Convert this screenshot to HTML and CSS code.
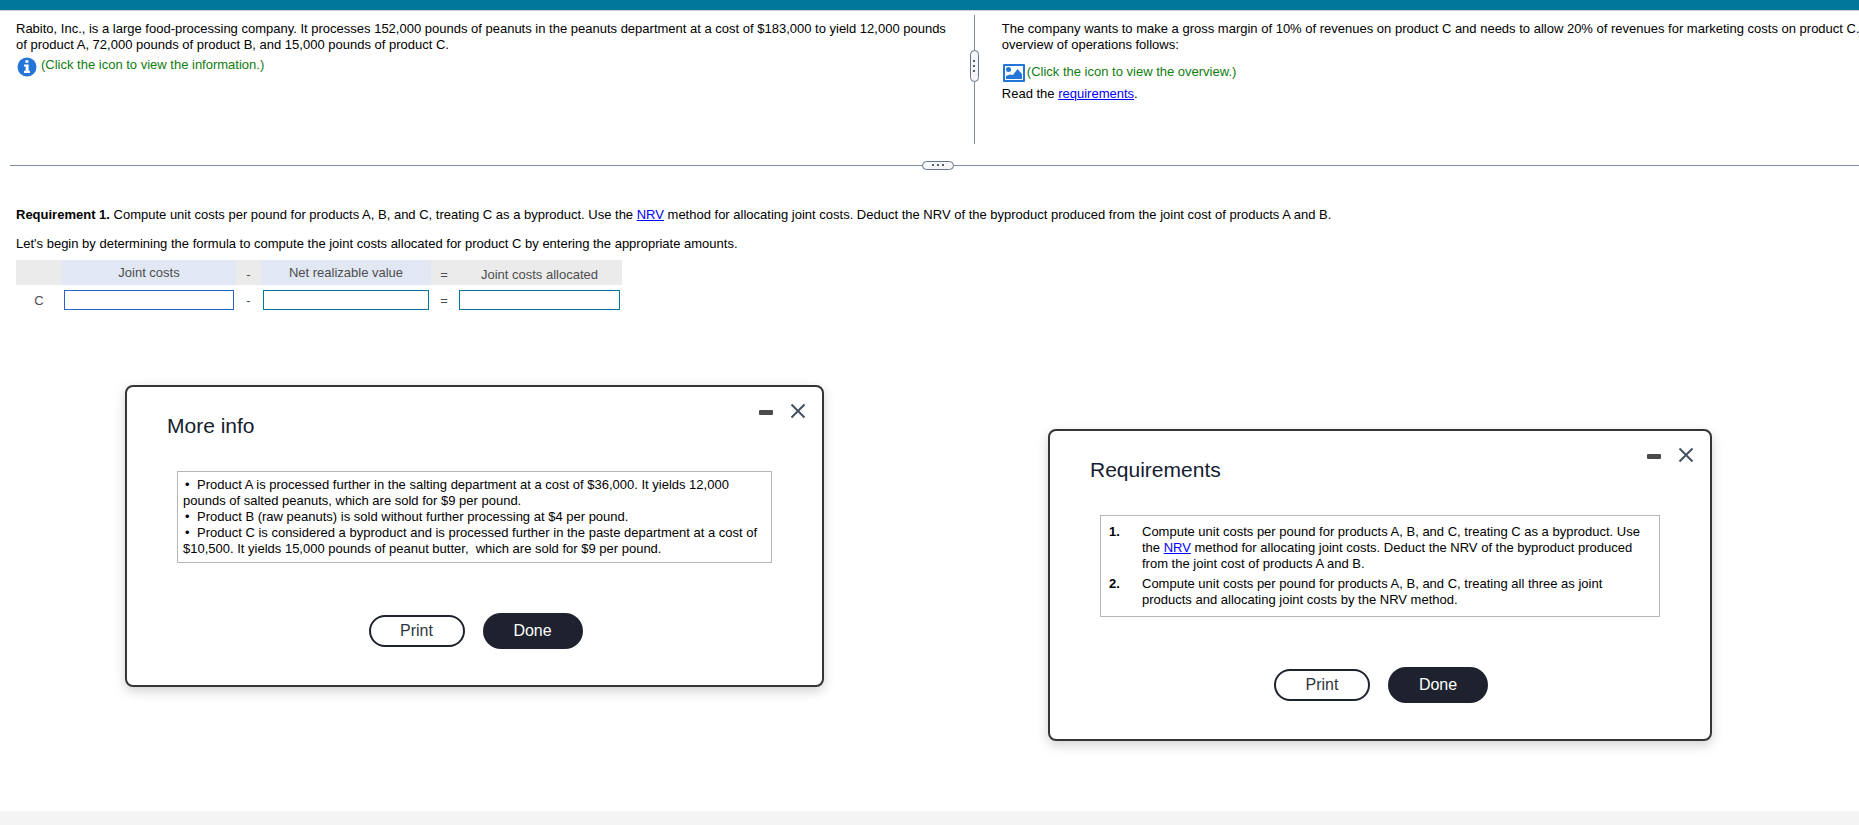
FILE: index.html
```html
<!DOCTYPE html>
<html lang="en">
<head>
<meta charset="utf-8">
<title>Joint cost allocation</title>
<link rel="stylesheet" href="styles.css">
</head>
<body>
<div class="topbar"></div>
<main class="page">
  <div class="problem">
    <section class="pane pane-left">
      <p class="para">Rabito, Inc., is a large food-processing company. It processes 152,000 pounds of peanuts in the peanuts department at a cost of $183,000 to yield 12,000 pounds of product A, 72,000 pounds of product B, and 15,000 pounds of product C.</p>
      <button type="button" class="icon-link">
        <svg class="icon-info" width="20" height="20" viewBox="0 0 20 20" aria-hidden="true"><circle cx="10" cy="10" r="9.500" fill="#2375d8"/><path d="M8.400 3.200h3v2.600h-3zM7 7.500h4.600v6.200H13V16H7v-2.300h1.600V9.600H7z" fill="#fff"/></svg>
        <span>(Click the icon to view the information.)</span>
      </button>
    </section>
    <div class="split-v"><button type="button" class="grip grip-v" aria-label="Resize panes"><i></i><i></i><i></i></button></div>
    <section class="pane pane-right">
      <p class="para nowrap">The company wants to make a gross margin of 10% of revenues on product C and needs to allow 20% of revenues for marketing costs on product C.<br>overview of operations follows:</p>
      <button type="button" class="icon-link icon-link-spaced">
        <svg class="icon-image" width="22" height="18" viewBox="0 0 22 18" aria-hidden="true"><rect width="22" height="18" rx="1" fill="#2375d8"/><rect x="2" y="2" width="18" height="14" fill="#fff"/><circle cx="5.500" cy="5.500" r="2.500" fill="#2375d8"/><path d="M3 15v-3l4-1.500 3 .5 4.500-6 4.500 5v5z" fill="#2375d8"/></svg>
        <span>(Click the icon to view the overview.)</span>
      </button>
      <p class="para">Read the <a href="#requirements">requirements</a>.</p>
    </section>
  </div>
  <div class="split-h"><button type="button" class="grip grip-h" aria-label="Resize question area"><i></i><i></i><i></i></button></div>
  <section class="work">
    <p class="para"><b>Requirement 1.</b> Compute unit costs per pound for products A, B, and C, treating C as a byproduct. Use the <a href="#nrv">NRV</a> method for allocating joint costs. Deduct the NRV of the byproduct produced from the joint cost of products A and B.</p>
    <p class="para">Let's begin by determining the formula to compute the joint costs allocated for product C by entering the appropriate amounts.</p>
    <table class="formula">
      <colgroup><col class="c-name"><col class="c-cost"><col class="c-op"><col class="c-nrv"><col class="c-op wide"><col class="c-alloc"></colgroup>
      <thead>
        <tr><th></th><th class="blue" id="h1">Joint costs</th><th class="low">-</th><th class="blue" id="h2">Net realizable value</th><th class="low">=</th><th class="low" id="h3">Joint costs allocated</th></tr>
      </thead>
      <tbody>
        <tr><td>C</td><td class="field"><input class="amount focus" type="text" aria-labelledby="h1"></td><td>-</td><td class="field"><input class="amount" type="text" aria-labelledby="h2"></td><td>=</td><td class="field"><input class="amount" type="text" aria-labelledby="h3"></td></tr>
      </tbody>
    </table>
  </section>
</main>
<footer class="footer"></footer>

<section class="dialog dialog-info" role="dialog" aria-labelledby="info-title">
  <div class="tools">
    <button type="button" class="tool" aria-label="Minimize"><svg width="14" height="16" viewBox="0 0 14 16"><rect y="7" width="14" height="5" rx="1" fill="#4b4b4d"/></svg></button>
    <button type="button" class="tool" aria-label="Close"><svg width="16" height="16" viewBox="0 0 16 16"><path d="M1.500 1.500l13 13M14.500 1.500l-13 13" stroke="#44525f" stroke-width="2" fill="none"/></svg></button>
  </div>
  <h2 class="title" id="info-title">More info</h2>
  <div class="box box-info">
    <p><span class="bullet">•</span>Product A is processed further in the salting department at a cost of $36,000. It yields 12,000 pounds of salted peanuts, which are sold for $9 per pound.</p>
    <p><span class="bullet">•</span>Product B (raw peanuts) is sold without further processing at $4 per pound.</p>
    <p><span class="bullet">•</span>Product C is considered a byproduct and is processed further in the paste department at a cost of $10,500. It yields 15,000 pounds of peanut butter,&nbsp; which are sold for $9 per pound.</p>
  </div>
  <div class="actions"><button type="button" class="btn btn-print">Print</button><button type="button" class="btn btn-done">Done</button></div>
</section>

<section class="dialog dialog-req" id="requirements" role="dialog" aria-labelledby="req-title">
  <div class="tools">
    <button type="button" class="tool" aria-label="Minimize"><svg width="14" height="16" viewBox="0 0 14 16"><rect y="7" width="14" height="5" rx="1" fill="#4b4b4d"/></svg></button>
    <button type="button" class="tool" aria-label="Close"><svg width="16" height="16" viewBox="0 0 16 16"><path d="M1.500 1.500l13 13M14.500 1.500l-13 13" stroke="#44525f" stroke-width="2" fill="none"/></svg></button>
  </div>
  <h2 class="title" id="req-title">Requirements</h2>
  <div class="box box-req">
    <b>1.</b><p>Compute unit costs per pound for products A, B, and C, treating C as a byproduct. Use the <a href="#nrv">NRV</a> method for allocating joint costs. Deduct the NRV of the byproduct produced from the joint cost of products A and B.</p>
    <b>2.</b><p>Compute unit costs per pound for products A, B, and C, treating all three as joint products and allocating joint costs by the NRV method.</p>
  </div>
  <div class="actions"><button type="button" class="btn btn-print">Print</button><button type="button" class="btn btn-done">Done</button></div>
</section>
</body>
</html>
```
FILE: styles.css
```css
* { box-sizing: border-box; }
body {
  margin: 0;
  min-height: 100vh;
  display: flex;
  flex-direction: column;
  overflow: hidden;
  background: #fff;
  color: #000;
  font: 13px/16px "Liberation Sans", Arial, sans-serif;
}
p, h2 { margin: 0; }
button { font: inherit; color: inherit; padding: 0; border: 0; background: none; cursor: pointer; }
a { color: #00f; text-decoration: underline; }
.topbar { height: 11px; background: #00789b; border-bottom: 1px solid #c9ced8; }
.page { flex: 1; }
.footer { height: 14px; background: #f4f4f4; }

.problem { display: grid; grid-template-columns: 1073fr 25px 973fr; padding-top: 4px; }
.pane { padding-top: 6px; min-width: 0; }
.pane-left { padding-left: 16px; padding-right: 10px; }
.pane-right { padding-left: 15px; }
.nowrap { white-space: nowrap; }
.icon-link { display: flex; align-items: flex-start; gap: 4px; color: #107c10; padding: 4px 0 0 1px; text-align: left; }
.icon-link-spaced { padding: 11px 0 4px 1px; gap: 2px; }

.split-v {
  height: 129px;
  display: flex;
  justify-content: center;
  padding-top: 35px;
  background: linear-gradient(#7f8b9b, #7f8b9b) center / 1px 100% no-repeat;
}
.split-h {
  margin: 14px -7px 0 10px;
  height: 14px;
  display: flex;
  justify-content: center;
  align-items: center;
  background: linear-gradient(#7f8b9b, #7f8b9b) center / 100% 1px no-repeat;
}
.grip {
  display: flex;
  align-items: center;
  justify-content: center;
  gap: 3px;
  border: 1px solid #66758a;
  border-radius: 6px;
  background: #f4f6f9;
}
.grip i { width: 2px; height: 2px; background: #55606d; }
.grip-v { width: 9px; height: 32px; flex-direction: column; }
.grip-h { width: 32px; height: 9px; }

.work { padding: 35px 16px 0; }
.work .para + .para { margin-top: 13px; }

.formula { margin-top: 8px; border-collapse: collapse; table-layout: fixed; width: 606px; color: #4d4d4f; }
.c-name { width: 46px; }
.c-cost { width: 174px; }
.c-op { width: 25px; }
.c-nrv { width: 170px; }
.c-op.wide { width: 26px; }
.formula th { height: 25px; padding: 0; font-weight: normal; text-align: center; background: #ebebeb; }
.formula th.low { padding: 4px 0 0; }
.formula th.blue { background: #e1e8f3; }
.formula td { padding: 7px 2px 0; text-align: center; }
.formula td.field { padding-top: 5px; }
.amount { display: block; width: 100%; height: 20px; padding: 0 4px; border: 1px solid #007a9c; background: #fff; font: inherit; outline: 0; }
.amount.focus { border-color: #2a62c9; }

.dialog {
  position: absolute;
  border: 2px solid #333537;
  border-radius: 8px;
  background: #fff;
  box-shadow: 0 4px 12px rgba(0, 0, 0, 0.18);
}
.dialog-info { left: 125px; top: 385px; width: 699px; padding: 27px 50px 36px; }
.dialog-req { left: 1048px; top: 429px; width: 664px; padding: 27px 50px 36px; }
.tools { position: absolute; top: 16px; right: 16px; display: flex; gap: 17px; }
.tool { display: block; }
.tool svg { display: block; }
.title { margin-left: -10px; font-size: 21px; line-height: 24px; font-weight: normal; color: #15202e; }
.box { margin-top: 33px; border: 1px solid #b5b5b5; }
.box-info { padding: 5px; }
.bullet { display: inline-block; width: 14px; padding-left: 2px; }
.box-req { display: grid; grid-template-columns: 33px 1fr; row-gap: 4px; padding: 8px; }
.actions { display: flex; align-items: center; justify-content: center; gap: 18px; margin: 50px 0 0 2px; }
.btn { font-size: 16px; line-height: 20px; border-radius: 18px; }
.btn-print { width: 96px; height: 32px; border: 2px solid #1d222e; color: #2f3540; background: #fff; }
.btn-done { width: 100px; height: 36px; background: #1d222e; color: #fff; }
```
